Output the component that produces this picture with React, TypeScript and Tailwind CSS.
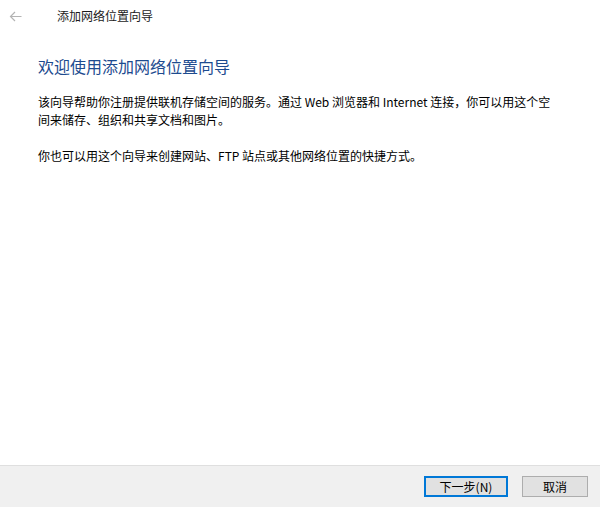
import React from "react";

const font = { fontFamily: '"Microsoft YaHei", "Noto Sans CJK SC", "Noto Sans", sans-serif' };

export default function App() {
  return (
    <div className="w-[600px] h-[507px] bg-white flex flex-col text-[#000]" style={font}>
      {/* title bar */}
      <div className="h-[32px] flex items-center">
        <div className="w-[28px] flex items-center justify-center pl-[2px]">
          <svg width="13" height="11" viewBox="0 0 13 11" fill="none">
            <path d="M12.5 5.5H1.5M6 1L1.5 5.5L6 10" stroke="#b4b4b4" strokeWidth="1.2" />
          </svg>
        </div>
        <div className="ml-[29px] text-[12px] leading-none text-[#1a1a1a]">添加网络位置向导</div>
      </div>

      {/* body */}
      <div className="flex-1 px-[38px] pt-[22px]">
        <div className="text-[16px] leading-[24px] text-[#1d4b8f]">欢迎使用添加网络位置向导</div>
        <div className="mt-[15px] text-[12px] leading-[18px] whitespace-nowrap">
          <p>
            该向导帮助你注册提供联机存储空间的服务。通过 Web 浏览器和 Internet 连接，你可以用这个空
            <br />
            间来储存、组织和共享文档和图片。
          </p>
          <p className="mt-[18px]">你也可以用这个向导来创建网站、FTP 站点或其他网络位置的快捷方式。</p>
        </div>
      </div>

      {/* footer */}
      <div className="h-[42px] bg-[#f0f0f0] border-t border-[#dfdfdf] flex items-center justify-end pr-[12px] gap-[14px]">
        <button className="w-[84px] h-[21px] bg-[#e1e1e1] border-2 border-[#0078d7] text-[12px] leading-none flex items-center justify-center text-[#000]">
          下一步(N)
        </button>
        <button className="w-[66px] h-[21px] bg-[#e1e1e1] border border-[#adadad] text-[12px] leading-none flex items-center justify-center text-[#000]">
          取消
        </button>
      </div>
    </div>
  );
}
